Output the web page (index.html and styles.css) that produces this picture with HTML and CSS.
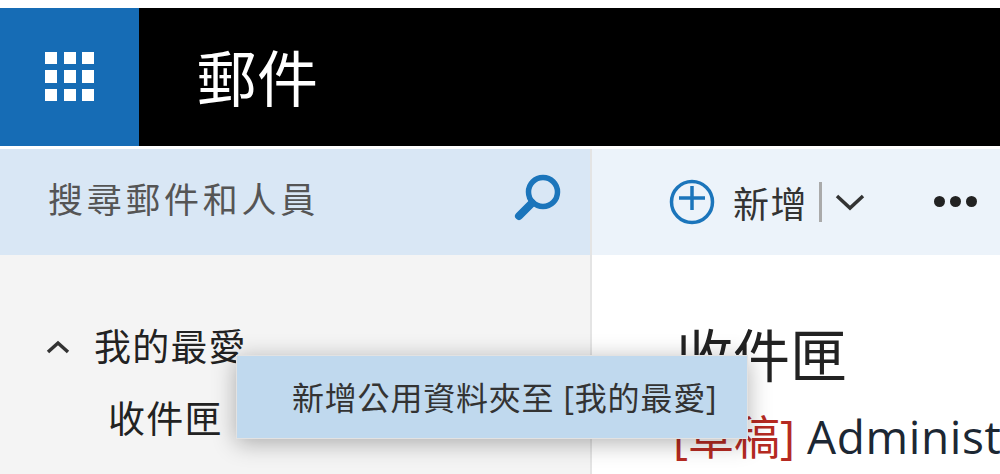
FILE: index.html
```html
<!DOCTYPE html>
<html lang="zh-Hant">
<head>
    <meta charset="UTF-8">
    <meta name="viewport" content="width=device-width, initial-scale=1.0">
    <title>郵件</title>
    <link rel="stylesheet" href="styles.css">
</head>
<body>
    <header class="topbar">
        <div class="launcher">
            <svg class="waffle" width="50" height="50" viewBox="0 0 50 50">
                <g fill="#fff">
                    <rect x="0" y="0" width="12" height="12"/><rect x="19" y="0" width="12" height="12"/><rect x="37" y="0" width="12" height="12"/>
                    <rect x="0" y="18" width="12" height="13"/><rect x="19" y="18" width="12" height="13"/><rect x="37" y="18" width="12" height="13"/>
                    <rect x="0" y="37" width="12" height="12"/><rect x="19" y="37" width="12" height="12"/><rect x="37" y="37" width="12" height="12"/>
                </g>
            </svg>
        </div>
        <div class="app-title">郵件</div>
    </header>

    <div class="content">
        <aside class="sidebar">
            <div class="search">
                <span class="search-text">搜尋郵件和人員</span>
                <svg class="search-icon" width="50" height="50" viewBox="0 0 50 50">
                    <circle cx="31" cy="20" r="14.5" fill="none" stroke="#1b75bb" stroke-width="5.5"/>
                    <path d="M20 31 L7 44" stroke="#1b75bb" stroke-width="8" stroke-linecap="round"/>
                </svg>
            </div>
            <nav class="folders">
                <div class="group">
                    <svg class="caret" width="24" height="14" viewBox="0 0 24 14">
                        <path d="M2 12 L12 3 L22 12" fill="none" stroke="#333" stroke-width="3.5"/>
                    </svg>
                    <span>我的最愛</span>
                </div>
                <div class="folder">收件匣</div>
            </nav>
        </aside>

        <main class="main">
            <div class="toolbar">
                <svg class="plus" width="46" height="46" viewBox="0 0 46 46">
                    <circle cx="23" cy="23" r="20.5" fill="none" stroke="#1b75bb" stroke-width="3.5"/>
                    <path d="M10 19 H36 M23 7 V31" stroke="#1b75bb" stroke-width="3.5"/>
                </svg>
                <span class="new-label">新增</span>
                <span class="divider"></span>
                <svg class="chevron" width="30" height="18" viewBox="0 0 30 18">
                    <path d="M2 3 L15 15 L28 3" fill="none" stroke="#333" stroke-width="3.5"/>
                </svg>
                <div class="more"><i></i><i></i><i></i></div>
            </div>
            <div class="list">
                <h1>收件匣</h1>
                <div class="message"><span class="draft">[草稿]</span> <span class="sender">Administ</span></div>
            </div>
        </main>
    </div>

    <div class="context-menu">新增公用資料夾至 [我的最愛]</div>
</body>
</html>
```

FILE: styles.css
```css
html, body {
    margin: 0;
    height: 474px;
    overflow: hidden;
}
body {
    padding-top: 8px;
    box-sizing: border-box;
    background: #fff;
    color: #222;
    font-family: "Open Sans", "Noto Sans CJK TC", sans-serif;
}
.topbar {
    display: flex;
    height: 138px;
    background: #000;
}
.launcher {
    width: 139px;
    background: #166cb5;
    display: flex;
    align-items: center;
    justify-content: center;
}
.app-title {
    margin-left: 57px;
    color: #fff;
    font-size: 61px;
    line-height: 142px;
}
.content {
    display: flex;
    margin-top: 3px;
}
.sidebar {
    width: 590px;
    height: 325px;
    background: #f4f4f4;
    border-right: 2px solid #e4e4e4;
}
.search {
    height: 106px;
    box-sizing: border-box;
    background: #d9e7f5;
    display: flex;
    align-items: center;
    justify-content: space-between;
    padding: 0 28px 10px 48px;
}
.search-text {
    font-size: 35px;
    letter-spacing: 3.7px;
    color: #555;
}
.folders {
    padding-top: 66px;
}
.group {
    display: flex;
    align-items: center;
    gap: 24px;
    padding-left: 46px;
    font-size: 37px;
    line-height: 52px;
    letter-spacing: 1.2px;
}
.folder {
    margin-top: 20px;
    padding-left: 108px;
    font-size: 37px;
    line-height: 52px;
    letter-spacing: 1.2px;
}
.main {
    flex: 1;
    min-width: 0;
}
.toolbar {
    height: 106px;
    background: #ecf3fa;
    display: flex;
    align-items: center;
    padding-left: 77px;
}
.new-label {
    margin-left: 18px;
    font-size: 36px;
    letter-spacing: 1.5px;
    color: #333;
}
.divider {
    width: 3px;
    height: 40px;
    margin-left: 11px;
    background: #aaa;
}
.chevron {
    margin-left: 13px;
}
.more {
    display: flex;
    gap: 5px;
    margin-left: 69px;
    margin-bottom: 2px;
}
.more i {
    width: 11px;
    height: 11px;
    border-radius: 50%;
    background: #222;
}
.list {
    padding-left: 81px;
    white-space: nowrap;
}
h1 {
    margin: 60px 0 0 3px;
    font-size: 57px;
    font-weight: 400;
    line-height: 80px;
}
.message {
    margin-top: 10px;
    font-size: 46px;
    line-height: 62px;
    color: #1c2733;
}
.draft {
    color: #b52a22;
}
.sender {
    letter-spacing: 0.6px;
}
.context-menu {
    position: absolute;
    left: 236px;
    top: 355px;
    width: 512px;
    height: 84px;
    box-sizing: border-box;
    padding-left: 55px;
    line-height: 84px;
    font-size: 32px;
    letter-spacing: 0.8px;
    color: #333;
    background: #c0d9ee;
    border: 1px solid #e2e2e2;
    box-shadow: 0 4px 22px rgba(0, 0, 0, 0.3);
    white-space: nowrap;
}
```
